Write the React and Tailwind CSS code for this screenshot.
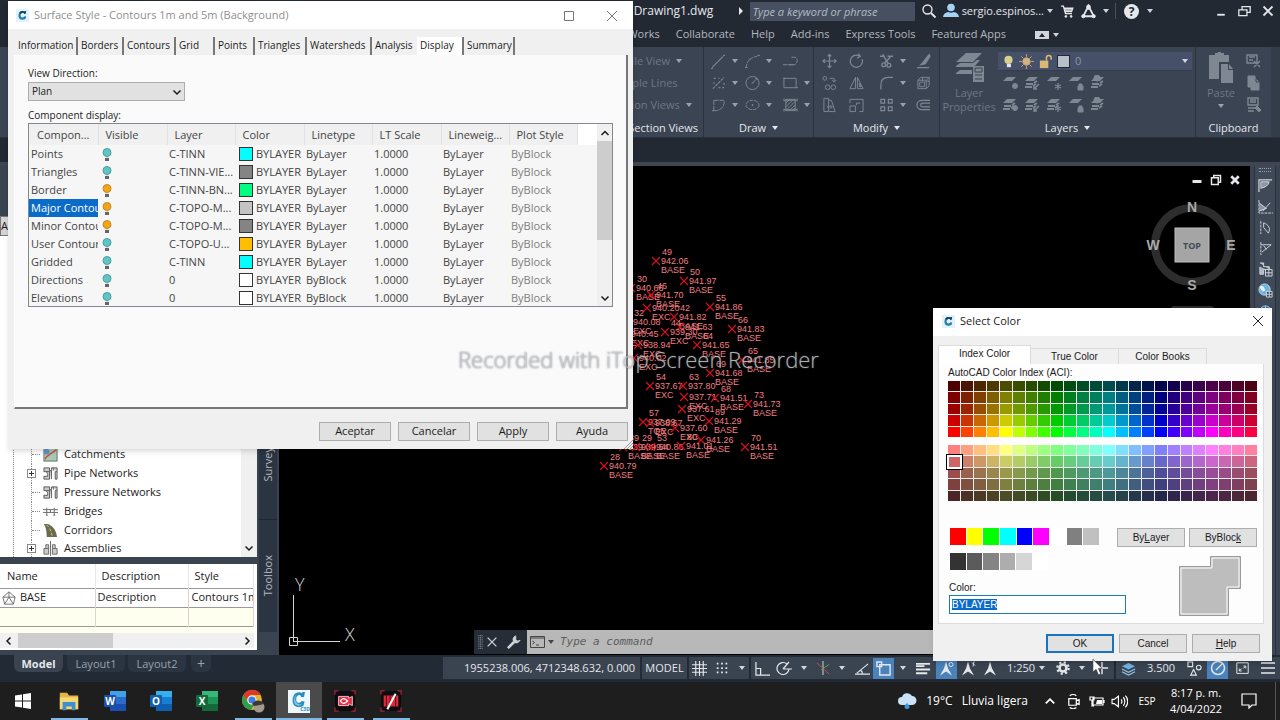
import { useEffect, useRef } from 'react';

/* ── Small shared pieces ── */

function Caret({ className = 'text-gray-300' }) {
  return (
    <svg viewBox="0 0 6 4" className={`w-[6px] h-[4px] shrink-0 ${className}`} fill="currentColor">
      <path d="M0 0h6L3 4z" />
    </svg>
  );
}

function Icon({ children, className = 'w-4 h-4' }) {
  return (
    <svg viewBox="0 0 16 16" className={`shrink-0 ${className}`} fill="none" stroke="currentColor" strokeWidth="1">
      {children}
    </svg>
  );
}

function CivilLogo({ className }) {
  return (
    <svg viewBox="0 0 16 16" className={className}>
      <rect width="16" height="16" rx="1" fill="#e3f1f8" />
      <path d="M12.500 2.500L11.800 5.800H10c-.2-1-1-1.300-2-1.100-1.700.3-2.300 1.800-2.300 3.400 0 1.700.9 2.500 2.300 2.300 1.200-.1 2-.6 2.600-1.400l2 .3-.8 2.700c-1 .9-2.400 1.300-4 1.300-3 0-4.800-1.800-4.800-5C3 4.900 5 2.700 8 2.600c1 0 1.800.2 2.400.7l.3-.8z" fill="#1f7fae" />
      <path d="M12.500 2.500L11.800 5.800H10c-.2-1-1-1.300-2-1.100-1 .2-1.600.7-2 1.500L4 4.500C5 3.300 6.300 2.600 8 2.600c1 0 1.800.2 2.400.7l.3-.8z" fill="#123f66" />
    </svg>
  );
}

function Chevron({ dir, className = 'w-[10px] h-[10px]' }) {
  const d = { up: 'M1.500 7L5 3.500 8.500 7', down: 'M1.500 3.500L5 7l3.500-3.500', left: 'M6.500 1.500L3 5l3.500 3.500', right: 'M3.500 1.500L7 5 3.500 8.500' };
  return (
    <svg viewBox="0 0 10 10" className={className} fill="none" stroke="currentColor" strokeWidth="1.500">
      <path d={d[dir]} />
    </svg>
  );
}

/* ── Title bar and ribbon ── */

function TitleBar() {
  return (
    <header className="h-[22px] shrink-0 flex items-center justify-end text-[12px] text-gray-200">
      <span className="w-[105px]">Drawing1.dwg</span>
      <svg viewBox="0 0 4 8" className="w-[4px] h-[8px] mr-[7px]" fill="#e5e7eb">
        <path d="M0 0l4 4-4 4z" />
      </svg>
      <input
        type="text"
        aria-label="Search help"
        placeholder="Type a keyword or phrase"
        className="w-[165px] h-[19px] px-[3px] bg-[#465061] text-[11px] italic placeholder-[#b4bac3] outline-none"
      />
      <button aria-label="Search" className="w-[28px] flex justify-center">
        <Icon>
          <circle cx="6.500" cy="6.500" r="4.500" strokeWidth="1.400" />
          <path d="M10 10l4.500 4.500" strokeWidth="2" />
        </Icon>
      </button>
      <button className="flex items-center gap-[3px] text-[11px] whitespace-nowrap">
        <svg viewBox="0 0 16 16" className="w-4 h-4" fill="#a4d3f5">
          <circle cx="8" cy="4.500" r="3.800" />
          <path d="M0 14c.3-3 2.500-4.500 5.500-5 1.500 1 3.500 1 5 0 3 .5 5.200 2 5.500 5z" />
        </svg>
        sergio.espinos...
        <Caret />
      </button>
      <button aria-label="Store" className="w-[28px] flex justify-center">
        <Icon className="w-[13px] h-[13px]">
          <path d="M0 1.500h3l2.500 9h8M4 4h10.500l-1.500 4H5M4 6h10" strokeWidth="1.600" />
          <circle cx="6" cy="14" r="1.200" fill="currentColor" />
          <circle cx="12.500" cy="14" r="1.200" fill="currentColor" />
        </Icon>
      </button>
      <button aria-label="Apps" className="w-[34px] flex items-center gap-[7px]">
        <Icon className="w-[15px] h-[15px]">
          <path d="M8 2L2.500 13h11zM8 2v4" strokeWidth="2" />
          <circle cx="8" cy="3" r="2" fill="currentColor" />
          <circle cx="2.500" cy="13" r="1.700" fill="currentColor" />
          <circle cx="13.500" cy="13" r="1.700" fill="currentColor" />
        </Icon>
        <Caret />
      </button>
      <span className="w-px h-4 bg-[#4a515c]" />
      <button aria-label="Help" className="w-[99px] pl-2 flex items-center gap-[8px]">
        <span className="w-[15px] h-[15px] rounded-full bg-gray-200 text-[#222933] text-[12px] leading-[15px] font-bold">?</span>
        <Caret />
      </button>
      <div className="flex items-center gap-[11px] pr-[6px]">
        <button aria-label="Minimize"><Icon className="w-[12px] h-[12px]"><path d="M3 13h10" strokeWidth="2.500" /></Icon></button>
        <button aria-label="Restore"><Icon className="w-[13px] h-[13px]"><path d="M5 6V2h10v7h-4M1 6h10v7H1z" strokeWidth="1.600" /></Icon></button>
        <button aria-label="Close"><Icon className="w-[12px] h-[12px]"><path d="M2 2l12 12M14 2L2 14" strokeWidth="2.400" /></Icon></button>
      </div>
    </header>
  );
}

function MenuTabs() {
  return (
    <nav className="h-[25px] shrink-0 flex items-center justify-end gap-[16px] pr-[221px] text-[11px] text-[#b3b8bf]">
      {['Autodesk Works', 'Collaborate', 'Help', 'Add-ins', 'Express Tools', 'Featured Apps'].map((t) => (
        <a key={t} href="#" className="whitespace-nowrap">{t}</a>
      ))}
      <button aria-label="Ribbon display" className="ml-[13px] flex items-center gap-1">
        <span className="w-[14px] h-2 bg-gray-300 flex items-center justify-center text-[#222933]">
          <Caret className="rotate-180 w-[5px] text-[#222933]" />
        </span>
        <Caret />
      </button>
    </nav>
  );
}

const drawTools = [
  { name: 'Line', menu: true, art: <path d="M1 15L13 3M0 16h2M13 2h2" strokeWidth="1.200" /> },
  { name: 'Arc', menu: true, art: <path d="M1 15C2 9 5 4 13 3M0 15h3M4 6h2M13 2h3" strokeDasharray="4 1" /> },
  { name: 'Polyline', art: <path d="M0 12h9M1 12v-1M9 4h4c3 1 3 7-1 8h-3M6 12h5" strokeDasharray="5 1" /> },
  { name: 'Points', menu: true, art: <path d="M2 14L14 2M3 3h2M8 3h1M2 8h2M8 13h2M13 9h2M12 13h2" strokeDasharray="3 1" strokeWidth="1.300" /> },
  { name: 'Circle', menu: true, art: <><circle cx="8" cy="8" r="7" /><path d="M8 8l4-4M7 8h2M11 3l2 0v2" /></> },
  { name: 'Rectangle', menu: true, art: <path d="M1 3h13v10H1zM0 3h3M13 13h3" /> },
  { name: 'Region', menu: true, art: <path d="M3 3h11c1 6-3 10-8 11M3 3v11M1 14h5" strokeDasharray="5 1" /> },
  { name: 'Ellipse', menu: true, art: <><ellipse cx="8" cy="8" rx="7" ry="5" strokeDasharray="4 1" /><path d="M7 8h2M8 7v2" /></> },
  { name: 'Hatch', menu: true, art: <path d="M1 1v3M15 1v3M1 12v3M15 12v3M3 2h10v12H3zM3 6l4-4M3 10l8-8M3 14L13 4M7 14l6-6M10 14l3-3M1 3h14M1 13h14" /> },
];

const modifyTools = [
  { name: 'Move', art: <path d="M8 1v14M1 8h14M6 3l2-2 2 2M6 13l2 2 2-2M3 6L1 8l2 2M13 6l2 2-2 2" strokeWidth="1.300" /> },
  { name: 'Rotate', art: <path d="M11 2.500A6.500 6.500 0 1 0 14 6M10 0l2 3-3.500 2" strokeWidth="1.300" /> },
  { name: 'Trim', menu: true, art: <><path d="M1 3h5M9 3h6M4 1l6 10M12 4L6 10" strokeWidth="1.600" /><circle cx="5" cy="12" r="2" strokeWidth="1.500" /><circle cx="10.500" cy="12.500" r="2" strokeWidth="1.500" /></> },
  { name: 'Erase', art: <path d="M14 1L7 10 5 12l5-1 5-8zM1 15h13" fill="currentColor" strokeWidth="1.200" /> },
  { name: 'Copy', art: <><circle cx="3" cy="3" r="2" /><circle cx="6" cy="12.500" r="2.500" /><circle cx="12" cy="12.500" r="2.500" /><path d="M8 3h5v4M11 5l2 2 2-2" /></> },
  { name: 'Mirror', art: <path d="M7 2v12H1zM9 2v12h6zM11 8v4h2z" /> },
  { name: 'Fillet', menu: true, art: <path d="M2 15V10C2 5 5 2 10 2h5" strokeWidth="1.300" /> },
  { name: 'Explode', art: <path d="M2 5h9v9H2zM2 5l3-3h9v9l-3 3M11 5l3-3M4 7h5v5H4zM7 2v4M14 6h-4" /> },
  { name: 'Stretch', art: <path d="M2 1h5v14H2zM7 3l3 0 4 12H7M5 10h5M9 8l2 2-2 2" /> },
  { name: 'Scale', art: <path d="M1 9h6v6H1zM1 6V2h14v13h-4M8 8V6h4" /> },
  { name: 'Array', menu: true, art: <path d="M2 2h4v4H2zM10 2h4v4h-4zM2 10h4v4H2zM10 10h4v4h-4z" strokeWidth="1.300" /> },
  { name: 'Offset', art: <path d="M15 3H6a5 5 0 0 0 0 10h9M15 6H7a2 2 0 0 0 0 4h8" strokeWidth="1.300" /> },
];

function ToolGrid({ tools, className }) {
  return (
    <div className={`grid gap-y-[6px] ${className}`}>
      {tools.map((t) => (
        <button key={t.name} aria-label={t.name} className="flex items-center gap-[6px] text-[#7f8792]">
          <Icon className="w-[15px] h-4">{t.art}</Icon>
          {t.menu && <Caret className="text-gray-400 w-[5px]" />}
        </button>
      ))}
    </div>
  );
}

function PanelLabel({ children, menu }) {
  return (
    <div className="h-[18px] mt-auto flex items-center justify-center gap-[6px] text-[11px] text-gray-200 whitespace-nowrap">
      {children}
      {menu && <Caret className="text-gray-200" />}
    </div>
  );
}

const layerBadges = [
  <circle cx="13" cy="11" r="2.500" fill="currentColor" />,
  <path d="M15 9l-5 5M10 11v3h3" strokeWidth="1.500" />,
  <path d="M12 8v7M9 10l6 3M15 10l-6 3" strokeWidth="1.300" />,
  <path d="M10 11h5v4h-5zM11 11V9h3v2" fill="currentColor" />,
  <circle cx="7" cy="3" r="3" fill="currentColor" />,
];

function LayersGlyph({ badge, stacked }) {
  return (
    <Icon className="w-4 h-4">
      <path d="M5 2h9l-4 4H1z" fill="currentColor" stroke="none" />
      {stacked && <path d="M2 9h7M1 12h7M10 8l3-2M9 11l3-2" strokeWidth="1.800" />}
      {badge}
    </Icon>
  );
}

function Ribbon() {
  return (
    <div className="h-[91px] shrink-0 flex justify-end bg-[#3b4453] border-b border-[#2a323e] text-[11px] text-[#6f7783]">
      <section className="w-[205px] flex flex-col border-r border-[#2a323e]">
        <div className="w-[93px] ml-auto pt-[6px] flex flex-col gap-[6px] whitespace-nowrap leading-[16px]">
          <button className="flex items-center gap-[6px]">Profile View <Caret className="text-gray-400 w-[5px]" /></button>
          <button className="text-left">Sample Lines</button>
          <button className="flex items-center gap-[6px]">Section Views <Caret className="text-gray-400 w-[5px]" /></button>
        </div>
        <div className="mt-auto pr-[5px] h-[18px] text-right text-gray-200 leading-[18px]">Profile &amp; Section Views</div>
      </section>
      <section className="w-[110px] flex flex-col border-r border-[#2a323e] pt-[6px]">
        <ToolGrid tools={drawTools} className="pl-[7px] grid-cols-[34px_38px_30px]" />
        <PanelLabel menu>Draw</PanelLabel>
      </section>
      <section className="w-[126px] flex flex-col border-r border-[#2a323e] pt-[6px]">
        <ToolGrid tools={modifyTools} className="pl-[8px] grid-cols-[27px_30px_37px_20px]" />
        <PanelLabel menu>Modify</PanelLabel>
      </section>
      <section className="w-[256px] flex flex-col border-r border-[#2a323e]">
        <div className="flex pt-[5px]">
          <button className="w-[58px] flex flex-col items-center leading-[14px]">
            <svg viewBox="0 0 30 30" className="w-[30px] h-[32px] mb-[2px]" fill="#7f8792">
              <path d="M12 0h16l-9 9H2zM2 13l4-3h13l4-3h3l-6 7H2zM2 20l4-3h12v4H2z" />
              <rect x="19" y="13" width="11" height="16" />
              <path d="M21 15h7v4h-7zM21 22h7M21 26h7" fill="none" stroke="#3b4453" />
            </svg>
            Layer
            <span>Properties</span>
          </button>
          <div className="flex-1 pr-[3px]">
            <button aria-label="Current layer 0" className="w-full h-[19px] px-1 flex items-center gap-[3px] bg-[#465069] border-b border-[#333c4b]">
              <svg viewBox="0 0 16 16" className="w-[13px] h-[15px]">
                <circle cx="8" cy="6" r="5" fill="#d8cf8c" />
                <rect x="6" y="11" width="5" height="4" fill="#e2e4e8" />
              </svg>
              <svg viewBox="0 0 16 16" className="w-[17px] h-[15px]" stroke="#c9a877">
                <circle cx="8" cy="8" r="4" fill="#d3b183" />
                <path d="M8 0v3M8 13v3M0 8h3M13 8h3M2.500 2.500l2 2M11.500 11.500l2 2M13.500 2.500l-2 2M2.500 13.500l2-2" />
              </svg>
              <svg viewBox="0 0 16 16" className="w-[15px] h-[15px]">
                <path d="M9 7V4a2.500 2.500 0 0 1 5 0v2" fill="none" stroke="#d9b978" strokeWidth="1.600" />
                <rect x="2" y="7" width="9" height="8" fill="#d9b978" />
              </svg>
              <span className="w-[13px] h-[13px] ml-[1px] bg-[#b9bfc9] border border-[#222933]" />
              <span className="ml-[2px] text-[#8c93a0]">0</span>
              <Caret className="ml-auto text-gray-300" />
            </button>
            <div className="mt-[4px] pl-[4px] grid grid-cols-[repeat(5,22px)] gap-y-[6px] text-[#7f8792]">
              {layerBadges.map((b, i) => <button key={i} aria-label={`Layer tool ${i + 1}`}><LayersGlyph badge={b} stacked={i === 1 || i === 4} /></button>)}
              {layerBadges.map((b, i) => <button key={i} aria-label={`Layer tool ${i + 6}`}><LayersGlyph badge={b} stacked={i !== 3} /></button>)}
            </div>
          </div>
        </div>
        <PanelLabel menu>Layers</PanelLabel>
      </section>
      <section className="w-[75px] flex flex-col">
        <div className="flex pt-[5px]">
          <button className="w-[50px] flex flex-col items-center leading-[14px]">
            <svg viewBox="0 0 26 32" className="w-[26px] h-[32px] mb-[2px]" fill="#7f8792">
              <path d="M1 3h6V1h3V0h3v1h3v2h5v7H11v17H1z" />
              <path d="M13 12h7v6h5v13H13zM21 12l4 5h-4z" />
            </svg>
            Paste
            <Caret className="text-gray-400 mt-1" />
          </button>
          <div className="flex flex-col gap-[6px] pt-px text-[#7f8792]">
            <button aria-label="Cut"><Icon className="block w-4 h-4"><path d="M1 2h10v8H1zM3 4h6M3 7h4M8 8l6 6M14 8l-6 6" strokeWidth="1.400" /></Icon></button>
            <button aria-label="Copy clip"><Icon className="block w-4 h-4"><path d="M2 1h7v11H2zM5 4h5l3 3v8H5z" fill="currentColor" /><path d="M10 4v3h3" stroke="#3b4453" /></Icon></button>
            <button aria-label="Match"><Icon className="block w-4 h-4"><path d="M2 1h10v7H2zM4 3h6M4 5h6M2 11h7M2 14h6" strokeWidth="1.400" /><path d="M11 9l4 4-2 2-4-4z" fill="currentColor" /></Icon></button>
          </div>
        </div>
        <PanelLabel>Clipboard</PanelLabel>
      </section>
      <div className="w-[9px] bg-[#333c49]" />
    </div>
  );
}

/* ── Toolspace ── */

const treeItems = [
  { name: 'Catchments', art: <><rect x="1" y="1" width="14" height="14" fill="#a8c9b3" stroke="#5c6b70" /><path d="M2 13C5 8 8 8 14 3" stroke="#c2513e" strokeWidth="1.500" /><circle cx="4" cy="5" r="3" fill="#5d93c4" stroke="none" /></> },
  { name: 'Pipe Networks', open: true, art: <path d="M1 2h6v4H1zM3 6c2 1 2 2 2 5H1v3h6V6M9 14V5H7M9 2h6v4h-2v8h2V6M9 2v3M11 2v3" stroke="#555" fill="#ccc" /> },
  { name: 'Pressure Networks', art: <path d="M1 2h6v4H1zM3 6c2 1 2 2 2 5H1v3h6V6M9 14V5H7M9 2h6v4h-2v8h2V6M9 2v3M11 2v3" stroke="#555" fill="#ccc" /> },
  { name: 'Bridges', art: <path d="M0 6h16M0 9h16M4 4v8M8 6v3M12 4v8M3 12h2M11 12h2" stroke="#666" /> },
  { name: 'Corridors', art: <><path d="M1 1h4c6 2 9 7 10 14H4C4 9 3 4 1 1z" fill="#6c6a55" stroke="none" /><path d="M4 2c4 4 5 8 6 13" stroke="#e0d040" strokeDasharray="3 2" /></> },
  { name: 'Assemblies', open: true, art: <path d="M8 0v16M1 8h5v6H1zM10 8h5v6h-5zM3 8V4h3v4M10 8V4h3v4" stroke="#666" fill="#ccc" /> },
];

function Toolspace() {
  return (
    <aside className="w-[279px] shrink-0 flex bg-[#3a4350] text-[11px] text-[#1b1b1b]">
      <div className="w-[257px] flex flex-col min-h-0">
        <select aria-label="Toolspace view" className="mt-[50px] h-5 shrink-0 appearance-none bg-[#d4d4d4] border border-[#777]">
          <option>Active Drawing Settings View</option>
        </select>
        <div className="flex-1 min-h-0 flex bg-white">
          <ul className="flex-1 flex flex-col justify-end overflow-hidden ml-[13px] border-l border-dotted border-[#888]">
            {treeItems.map((t) => (
              <li key={t.name} className="h-[19px] last:h-[17px] shrink-0 flex items-center ml-[17px] border-l border-dotted border-[#888]">
                {t.open ? (
                  <button aria-label={`Expand ${t.name}`} className="w-[9px] h-[9px] -ml-[5px] mr-[7px] bg-white border border-[#888]">
                    <svg viewBox="0 0 7 7" className="block w-[7px] h-[7px]" stroke="#333"><path d="M1 3.500h5M3.500 1v5" /></svg>
                  </button>
                ) : (
                  <span className="w-2 mr-[3px] border-t border-dotted border-[#888]" />
                )}
                <Icon className="w-[15px] h-[15px]">{t.art}</Icon>
                <span className="ml-[6px] whitespace-nowrap">{t.name}</span>
              </li>
            ))}
          </ul>
          <div className="w-4 bg-[#f0f0f0] flex items-end justify-center pb-1">
            <Chevron dir="down" />
          </div>
        </div>
        <div className="h-[7px] shrink-0" />
        <div className="h-[86px] shrink-0 mb-[5px] bg-white flex flex-col pr-[3px]">
          <table className="w-full table-fixed border-collapse text-left">
            <thead>
              <tr className="h-[24px]">
                <th className="w-[95px] pl-[7px] font-normal border-r border-gray-200">Name</th>
                <th className="w-[93px] pl-[6px] font-normal border-r border-gray-200">Description</th>
                <th className="pl-[6px] font-normal border-r border-gray-200">Style</th>
              </tr>
            </thead>
            <tbody>
              <tr className="h-[19px] border-y border-[#9a9a9a]">
                <td className="border-r border-[#e6cfcf]">
                  <span className="flex items-center gap-1 pl-[2px]">
                    <Icon className="w-[14px] h-[14px]"><path d="M8 1l7 6-2 8H3L1 7zM8 1v6M1 7h7l7 0M8 7l-5 8M8 7l5 8" stroke="#666" /></Icon>
                    BASE
                  </span>
                </td>
                <td className="pl-[2px] border-r border-[#e6cfcf]">Description</td>
                <td className="pl-[3px] border-r border-[#e6cfcf] whitespace-nowrap overflow-hidden">Contours 1m and 5m</td>
              </tr>
              <tr className="h-[19px] bg-[#fffff0] border-b border-[#9a9a9a]">
                <td className="border-r border-[#e6cfcf]" />
                <td className="border-r border-[#e6cfcf]" />
                <td className="border-r border-[#e6cfcf]" />
              </tr>
            </tbody>
          </table>
          <div className="flex-1 bg-[#fffff0]" />
          <div className="h-[15px] shrink-0 mb-[2px] flex items-center bg-[#f0f0f0]">
            <span className="w-[18px] flex justify-center"><Chevron dir="left" /></span>
            <span className="w-[95px] h-full bg-[#cdcdcd]" />
            <span className="ml-auto pr-[2px]"><Chevron dir="right" /></span>
          </div>
        </div>
      </div>
      <div className="flex-1 flex flex-col justify-end pl-[2px] pr-[2px] pb-[23px] text-[#b3b8bf]">
        <button className="flex-1 w-full flex items-end justify-center pb-[38px] bg-[#2b3441] border-b border-[#1f2630]">
          <span className="[writing-mode:vertical-rl] rotate-180">Survey</span>
        </button>
        <button className="h-[112px] w-full flex items-center justify-center bg-[#2b3441]">
          <span className="[writing-mode:vertical-rl] rotate-180">Toolbox</span>
        </button>
      </div>
    </aside>
  );
}

/* ── Drawing area ── */

const surveyPoints = [
  [656, 261, '942.06', '49', 'BASE'],
  [684, 281, '941.97', '50', 'BASE'],
  [631, 288, '940.66', '30', 'BASE'],
  [651, 295, '941.70', '46', 'BASE'],
  [710, 307, '941.86', '55', 'BASE'],
  [647, 308, '940.20', '', 'EXC'],
  [674, 317, '941.82', '42', 'BASE'],
  [732, 329, '941.83', '66', 'BASE'],
  [680, 327, '941.63', '', 'BASE'],
  [665, 332, '939.30', '44', 'EXC'],
  [697, 345, '941.65', '64', 'BASE'],
  [628, 322, '940.08', '32', 'EXC'],
  [626, 334, '940.45', '', 'EXC'],
  [638, 345, '938.94', '', 'EXC'],
  [634, 358, '940.02', '', 'EXC'],
  [742, 360, '941.85', '65', 'BASE'],
  [710, 373, '941.68', '69', 'BASE'],
  [650, 386, '937.67', '54', 'EXC'],
  [683, 386, '937.80', '63', ''],
  [684, 397, '937.71', '', 'EXC'],
  [715, 398, '941.51', '68', 'BASE'],
  [748, 404, '941.73', '73', 'BASE'],
  [682, 409, '937.61', '', 'EXC'],
  [643, 422, '937.09', '57', 'TOE'],
  [650, 423, '938.67', '', 'EXC'],
  [709, 421, '941.29', '89', 'BASE'],
  [675, 428, '937.60', '', 'EXC'],
  [701, 440, '941.26', '', 'BASE'],
  [745, 447, '941.51', '70', 'BASE'],
  [623, 447, '939.09', '39', 'BASE'],
  [636, 447, '939.54', '29', 'BASE'],
  [651, 447, '940.86', '53', 'BASE'],
  [681, 446, '941.01', '80', 'BASE'],
  [604, 466, '940.79', '28', 'BASE'],
];

function Canvas() {
  return (
    <main className="flex-1 relative bg-black overflow-hidden">
      <svg className="absolute inset-0 w-full h-full" fill="none">
        <g transform="translate(-279 -166)">
          {surveyPoints.map(([x, y, z, n, code]) => (
            <g key={`${x}-${y}`}>
              <path d={`M${x - 4} ${y - 4}l8 8M${x + 4} ${y - 4}l-8 8`} stroke="#d0141c" strokeWidth="1.200" />
              <g fill="#f07e82" fontSize="9" fontFamily="'Liberation Sans', sans-serif">
                {n && <text x={x + 6} y={y - 6}>{n}</text>}
                <text x={x + 5} y={y + 3}>{z}</text>
                {code && <text x={x + 5} y={y + 12}>{code}</text>}
              </g>
            </g>
          ))}
          <path d="M293.500 595v46M293 641.500h47M289.500 637.500h8v8h-8z" stroke="#d4d4d4" />
          <g fill="#d4d4d4" fontSize="18" fontWeight="300" fontFamily="'Open Sans', sans-serif">
            <text x="295" y="591">Y</text>
            <text x="345" y="641">X</text>
          </g>
        </g>
      </svg>

      {/* Viewport controls */}
      <div className="absolute top-[8px] right-[9px] flex items-center gap-[7px] text-gray-200">
        <button aria-label="Minimize drawing"><Icon className="w-3 h-3"><path d="M2 10h12" strokeWidth="4" /></Icon></button>
        <button aria-label="Restore drawing"><Icon className="w-3 h-3"><path d="M5 5V2h9v9h-3M2 5h9v9H2z" strokeWidth="2" /></Icon></button>
        <button aria-label="Close drawing"><Icon className="w-3 h-3"><path d="M3 3l10 10M13 3L3 13" strokeWidth="3.500" /></Icon></button>
      </div>

      {/* View cube */}
      <svg viewBox="0 0 100 130" className="absolute top-[29px] right-[8px] w-[100px] h-[130px]">
        <circle cx="50" cy="50" r="37" fill="none" stroke="#2d2d2d" strokeWidth="8" />
        <rect x="33" y="33" width="34" height="34" fill="#a5a5a5" stroke="#bdbdbd" />
        <rect x="29" y="111" width="43" height="12" rx="3" fill="#2d2d2d" />
        <g fontFamily="'Liberation Sans', sans-serif" fontWeight="700" textAnchor="middle" fill="#a8a8a8" fontSize="14">
          <text x="50" y="17">N</text>
          <text x="50" y="95">S</text>
          <text x="11" y="55">W</text>
          <text x="89" y="55">E</text>
          <text x="50" y="54" fontSize="9" fill="#3f4b55" fontFamily="'Open Sans', sans-serif">TOP</text>
        </g>
      </svg>

      {/* Command line */}
      <div className="absolute left-[195px] right-0 bottom-px h-6 flex bg-[#262d37] text-gray-300">
        <div className="w-[53px] pl-1 flex items-center gap-[4px]">
          <svg viewBox="0 0 6 16" className="w-[5px] h-4" stroke="#c4c8ce" strokeDasharray="1 1.500"><path d="M1 0v16M3 0v16M5 0v16" /></svg>
          <button aria-label="Close command line"><Icon className="w-[10px] h-[10px]"><path d="M1 1l14 14M15 1L1 15" strokeWidth="2" /></Icon></button>
          <button aria-label="Customize" className="ml-[6px]">
            <Icon className="w-[14px] h-[14px]"><path d="M1 15L8 8" strokeWidth="3" /><path d="M10 1C7 2 6 5 8 8c2 2 5 1 7-2l-3 1-2-2z" fill="currentColor" /></Icon>
          </button>
        </div>
        <label className="flex-1 flex items-center gap-[3px] pl-[3px] bg-[#b8b8b8] text-[#444]">
          <svg viewBox="0 0 15 12" className="w-[15px] h-[12px]" fill="none" stroke="#444">
            <path d="M.5.5h14v11H.5zM.5 2h14M2.500 5l2 1.500-2 1.500M6 9h3" />
          </svg>
          <Caret className="text-[#444]" />
          <input
            type="text"
            aria-label="Command"
            placeholder="Type a command"
            className="flex-1 ml-[3px] bg-transparent outline-none italic text-[11px] font-['DejaVu_Sans_Mono','Liberation_Mono',monospace] placeholder-[#5c5c5c]"
          />
        </label>
      </div>
    </main>
  );
}

const sideTools = [
  <><path d="M1 15V2h14" strokeWidth="1.300" /><path d="M3 4h9C11 8 8 10 3 11z" fill="#8d96a3" /></>,
  <><path d="M1 1v14h15" strokeDasharray="3 1" /><path d="M1 4l8 6-8 3M5 13l8-9" fill="#8d96a3" /></>,
  <><path d="M3 1v14" strokeDasharray="3 1" /><path d="M6 3c5 2 8 6 5 11L6 8z" /></>,
  <><path d="M3 1v14" strokeDasharray="3 1" /><path d="M3 4h11L4 12M6 5l3 4" /></>,
  <><path d="M2 1h4v4h6v3M2 5v8h4V8h3" fill="#aeb5bf" /><path d="M8 8h7v7H8zM8 11.500h7M11.500 8v7" /></>,
  <><circle cx="7" cy="7" r="6" fill="#6fb4dc" stroke="#b5dcf2" /><path d="M3 3l3 1 2 4-3 1-3-4z" fill="#e6f1f7" stroke="none" /><path d="M9 9h6v6H9zM9 12h6M12 9v6" fill="#3a4350" /></>,
  <><circle cx="8" cy="8" r="6" fill="#2f6f9e" stroke="#9fcbe6" /><path d="M2 8h12M8 2v12M4 4l8 8" stroke="#9fcbe6" /></>,
];

function SideToolbar() {
  return (
    <div className="w-[30px] shrink-0 pl-1 pr-1 bg-[#3a4350]">
      <div className="h-full flex flex-col items-center gap-[6px] pt-[2px] bg-[#3f4957] border-x border-[#2a323e] text-gray-300">
        <span className="w-3 h-1 border-y border-dotted border-gray-400" />
        {sideTools.map((art, i) => (
          <button key={i} aria-label={`View tool ${i + 1}`}><Icon className="block w-[15px] h-[15px]">{art}</Icon></button>
        ))}
      </div>
    </div>
  );
}

/* ── Status bar ── */

function StatusBtn({ label, on, className, children }) {
  return (
    <button aria-label={label} className={`h-[21px] flex items-center justify-center ${on ? 'bg-[#4a82bb]' : ''} ${className}`}>
      {children}
    </button>
  );
}

function AnnoGlyph({ children }) {
  return (
    <Icon className="w-[16px] h-[17px]">
      <path d="M7 1L5 8 1 15l6-4 6 4-4-7z" fill="currentColor" stroke="none" />
      {children}
    </Icon>
  );
}

function StatusBar() {
  return (
    <footer className="h-[27px] shrink-0 flex justify-between bg-[#212a35] text-[11px] text-gray-200">
      <div className="flex items-start pl-[14px] text-[#9aa1ab]">
        <button className="w-[49px] h-[17px] font-bold text-gray-200 bg-[#3a4350] rounded-b-md leading-[17px]">Model</button>
        <button className="w-[58px] ml-1 h-[17px] bg-[#2b3441] rounded-b-md leading-[17px]">Layout1</button>
        <button className="w-[58px] ml-[3px] h-[17px] bg-[#2b3441] rounded-b-md leading-[17px]">Layout2</button>
        <button aria-label="New layout" className="w-[20px] ml-[5px] h-[17px] bg-[#2b3441] rounded-b-md leading-[17px] text-[14px]">+</button>
      </div>
      <div className="flex h-[26px] py-[2px] items-center">
        <span className="w-[197px] h-full pr-[5px] flex items-center justify-end bg-[#3a4350] whitespace-nowrap">1955238.006, 4712348.632, 0.000</span>
        <button className="w-[45px] h-full ml-[2px] bg-[#3a4350]">MODEL</button>
        <div className="h-full ml-[2px] flex items-center bg-[#3a4350]">
          <StatusBtn label="Grid" className="w-[21px]"><Icon className="w-[15px] h-[15px]"><path d="M4 0v16M8 0v16M12 0v16M0 4h16M0 8h16M0 12h16" strokeWidth="1.200" /></Icon></StatusBtn>
          <StatusBtn label="Snap" className="w-[24px]"><Icon className="w-[14px] h-[14px]"><path d="M2 3h13M2 8h13M2 13h13" strokeDasharray="2 3" strokeWidth="2" /></Icon></StatusBtn>
          <StatusBtn label="Snap menu" className="w-[15px]"><Caret /></StatusBtn>
        </div>
        <div className="h-full ml-[2px] flex items-center bg-[#3a4350]">
          <StatusBtn label="Ortho" className="w-[22px]"><Icon className="w-[15px] h-[15px]"><path d="M1 1v14h15M1 8h5v7" strokeWidth="1.300" /></Icon></StatusBtn>
          <StatusBtn label="Polar" className="w-[22px]"><Icon className="w-[16px] h-[16px]"><path d="M11 4a6 6 0 1 0 2 5M7 9h9M7 9l6-7" strokeWidth="1.200" /></Icon></StatusBtn>
          <StatusBtn label="Polar menu" className="w-[18px]"><Caret /></StatusBtn>
          <StatusBtn label="Isodraft" className="w-[19px]"><Icon className="w-[14px] h-[14px]"><path d="M8 0v16" /><path d="M1 2l14 13" stroke="#c75a4e" /><path d="M6 10l9-6" stroke="#5fae5f" /></Icon></StatusBtn>
          <StatusBtn label="Isodraft menu" className="w-[19px]"><Caret /></StatusBtn>
          <StatusBtn label="Tracking" className="w-[22px]"><Icon className="w-[15px] h-[15px]"><path d="M0 14h16M2 13L14 3M6 10c2 1 2 2 2 4" strokeWidth="1.200" /></Icon></StatusBtn>
          <StatusBtn label="Object snap" on className="w-[21px]"><Icon className="w-[15px] h-[15px]"><path d="M4 4h11v11H4V4zM1 1h5v5H1z" strokeWidth="1.500" /></Icon></StatusBtn>
          <StatusBtn label="Object snap menu" className="w-[17px]"><Caret /></StatusBtn>
          <StatusBtn label="Lineweight" className="w-[25px]"><Icon className="w-[15px] h-[15px]"><path d="M0 3h15M0 5.500h9M0 9h15M0 13h12" strokeWidth="2" /></Icon></StatusBtn>
          <StatusBtn label="Annotation visibility" on className="w-[21px]"><AnnoGlyph><circle cx="12" cy="4" r="2" /></AnnoGlyph></StatusBtn>
          <StatusBtn label="Auto scale" className="w-[23px]"><AnnoGlyph><path d="M11 2l3 3M13 1l-1 5" /></AnnoGlyph></StatusBtn>
          <StatusBtn label="Annotation" className="w-[22px]"><AnnoGlyph /></StatusBtn>
          <button className="w-[48px] flex items-center justify-center gap-[4px] whitespace-nowrap">1:250 <Caret /></button>
          <StatusBtn label="Workspace" className="w-[25px]"><Icon className="w-[14px] h-[14px]"><circle cx="8" cy="8" r="4" strokeWidth="3" /><circle cx="8" cy="8" r="6.500" strokeWidth="2.500" strokeDasharray="2.500 2.600" /></Icon></StatusBtn>
          <StatusBtn label="Workspace menu" className="w-[14px]"><Caret /></StatusBtn>
          <StatusBtn label="Monitor" className="w-[25px]"><Icon className="w-[14px] h-[14px]"><path d="M8 1v14M1 8h14" strokeWidth="1.600" /></Icon></StatusBtn>
        </div>
        <div className="h-full ml-[2px] flex items-center bg-[#3a4350]">
          <StatusBtn label="Elevation" className="w-[25px]">
            <svg viewBox="0 0 16 16" className="w-[15px] h-[15px]"><path d="M8 2l7 3.500L8 9 1 5.500z" fill="#6db3e3" /><path d="M1 8.500L8 12l7-3.500M1 11.500L8 15l7-3.500" fill="none" stroke="#8fc4ea" strokeWidth="1.300" /></svg>
          </StatusBtn>
          <span className="w-[40px] text-center">3.500</span>
          <StatusBtn label="Isolate" className="w-[26px]"><Icon className="w-[15px] h-[15px]"><path d="M1 1h5v5H1zM7 9l3 6H4z" strokeWidth="1.200" /><circle cx="12.500" cy="7" r="2.500" strokeWidth="1.200" /></Icon></StatusBtn>
          <StatusBtn label="Performance" on className="w-[21px]"><Icon className="w-[16px] h-[16px]"><circle cx="8" cy="8" r="6.500" strokeWidth="1.500" /><path d="M6 10L12 4" strokeWidth="1.200" /></Icon></StatusBtn>
          <StatusBtn label="Full screen" className="w-[28px]"><Icon className="w-[15px] h-[13px]"><path d="M1 1h14v13H1zM4 11l3-3M4 8v3h3M12 5L9 8M9 5h3v3" strokeWidth="1.200" /></Icon></StatusBtn>
          <StatusBtn label="Customization" className="w-[24px]"><Icon className="w-[16px] h-[16px]"><path d="M1 3h14M1 8h14M1 13h14" strokeWidth="1.500" /></Icon></StatusBtn>
        </div>
      </div>
    </footer>
  );
}

/* ── Windows taskbar ── */

function OfficeArt({ letter, dark, mid, light }) {
  return (
    <svg viewBox="0 0 24 24" className="w-6 h-6">
      <rect x="7" y="2" width="16" height="20" rx="1" fill={mid} />
      <rect x="7" y="2" width="16" height="6" fill={light} />
      <rect x="7" y="15" width="16" height="7" fill={dark} />
      <rect x="1" y="6" width="12" height="12" rx="1" fill={dark} />
      <text x="7" y="15.500" fontSize="10" fontWeight="700" fill="#fff" textAnchor="middle" fontFamily="'Open Sans', sans-serif">{letter}</text>
    </svg>
  );
}

function RecorderFrame({ children }) {
  return (
    <svg viewBox="0 0 24 24" className="w-[22px] h-[22px]">
      <rect x="1" y="1" width="22" height="22" rx="3" fill="#0d0d0f" />
      <path d="M1 5V1h4M19 1h4v4M23 19v4h-4M5 23H1v-4" fill="none" stroke="#9c2436" strokeWidth="1.500" />
      {children}
    </svg>
  );
}

const taskApps = [
  {
    name: 'Start',
    art: <svg viewBox="0 0 16 16" className="w-4 h-4" fill="#fff"><path d="M0 2.500L7 1.500V7.500H0zM8 1.300L16 0V7.500H8zM0 8.500H7V14.500L0 13.500zM8 8.500H16V16L8 14.700z" /></svg>,
  },
  {
    name: 'File Explorer',
    line: true,
    art: (
      <svg viewBox="0 0 24 24" className="w-[22px] h-[22px]">
        <path d="M2 3h8l2 3h10v15H2z" fill="#e5b544" />
        <path d="M2 8h20v13H2z" fill="#f7d774" />
        <path d="M5 13h14v9h-4v-4H9v4H5z" fill="#3d8fd1" />
      </svg>
    ),
  },
  { name: 'Word', art: <OfficeArt letter="W" dark="#1a50ad" mid="#2b6bc9" light="#439fe6" /> },
  { name: 'Outlook', art: <OfficeArt letter="O" dark="#0f5fb0" mid="#1a7fd4" light="#35b0ec" /> },
  { name: 'Excel', art: <OfficeArt letter="X" dark="#13693a" mid="#1f9357" light="#33b877" /> },
  {
    name: 'Chrome',
    line: true,
    art: (
      <svg viewBox="0 0 24 24" className="w-6 h-6">
        <circle cx="11" cy="11" r="10" fill="#e0b62d" />
        <path d="M2.300 6A10 10 0 0 1 20 6H11a5 5 0 0 0-4.500 7z" fill="#d93a2c" />
        <path d="M2.300 6A10 10 0 0 0 10 21l4-6.500a5 5 0 0 1-7.500-1.500z" fill="#2f9e4f" />
        <circle cx="11" cy="11" r="4.600" fill="#fff" />
        <circle cx="11" cy="11" r="3.600" fill="#3b7de0" />
        <circle cx="18" cy="18" r="5.500" fill="#a39a8c" />
        <path d="M11 15c2-4 9-5 12 0l-4 1-6 1z" fill="#3b3a38" />
      </svg>
    ),
  },
  {
    name: 'Civil 3D',
    active: true,
    art: (
      <svg viewBox="0 0 22 23" className="w-[22px] h-[23px]">
        <rect width="22" height="23" fill="#eef7fc" />
        <path d="M17 2l-1 5h-3c0-1.500-1-2-2-2-2 .3-2.800 2-2.800 4.500 0 2.300 1 3.500 2.800 3.300 1.200-.1 2-.7 2.600-1.800l3 .5-1 4c-1.200 1-3 1.500-5 1.500-4 0-6-2.500-6-6.500C4.600 5.500 7 2.300 11 2.200c1.300 0 2.300.3 3 1l.4-1.200z" fill="#2c8cbd" />
        <path d="M14 14.500c-1.500 1-3 1.500-4.500 1-2.500-.6-4-3-3.600-6 .3-2 1-3.600 2-4.600-.8 2-.8 4.300-.5 5.800.5 2.400 2.600 3.800 6.600 3.800z" fill="#7fc4e4" />
        <text x="17" y="21" fontSize="5" fontWeight="700" fill="#2c8cbd" textAnchor="middle" fontFamily="'Open Sans', sans-serif">C3D</text>
      </svg>
    ),
  },
  {
    name: 'Screen recorder',
    line: true,
    art: (
      <RecorderFrame>
        <path d="M5 7h11v2l4-2v10l-4-2v2H5z" fill="#e0304a" stroke="#f6c9cf" />
        <path d="M7 12c2-4 5-3 8 0-3 3-6 4-8 0z" fill="none" stroke="#fff" strokeWidth="1.300" />
      </RecorderFrame>
    ),
  },
  {
    name: 'Recorder capture',
    line: true,
    art: (
      <RecorderFrame>
        <rect x="4" y="6" width="16" height="12" fill="#dc2a3a" />
        <path d="M7 6v12M11 6v12M17 6v12" stroke="#4a0c14" />
        <path d="M17 4L8 21" stroke="#fff" strokeWidth="2.200" />
      </RecorderFrame>
    ),
  },
];

function Taskbar() {
  return (
    <div className="h-[38px] shrink-0 flex justify-between bg-[#1e1e1e] text-white">
      <div className="flex">
        {taskApps.map((a) => (
          <button
            key={a.name}
            aria-label={a.name}
            className={`w-[46px] pt-[2px] flex flex-col items-center ${a.active ? 'bg-[#4a4a4a]' : ''}`}
          >
            <span className="flex-1 flex items-center">{a.art}</span>
            <span className={`h-[2px] ${a.active ? 'w-full bg-[#80b8e6]' : 'w-[37px]'} ${a.line ? 'bg-[#80b8e6]' : ''}`} />
          </button>
        ))}
      </div>
      <div className="flex items-center text-[12px]">
        <button className="flex items-center gap-[9px] whitespace-nowrap">
          <svg viewBox="0 0 20 16" className="w-5 h-4">
            <path d="M5 12a4 4 0 0 1 0-8 5.500 5.500 0 0 1 10-1 4.500 4.500 0 0 1 0 9z" fill="#c9e2f7" />
            <path d="M9 16c-3-2-1-4 1-6 2 2 4 4 1 6z" fill="#3c96dc" />
          </svg>
          19°C <span>Lluvia ligera</span>
        </button>
        <button aria-label="Show hidden icons" className="w-[38px] pl-[6px] flex justify-center"><Chevron dir="up" className="w-3 h-3" /></button>
        <button aria-label="Camera" className="w-[23px]"><Icon className="w-[15px] h-[15px]"><path d="M3 5h8v7H3zM11 7l3-1v5l-3-1M4 2c2-2 5-2 7 0M4 14.500c2 1.500 5 1.500 7 0" strokeWidth="1.300" /></Icon></button>
        <button aria-label="Battery" className="w-[22px]"><Icon className="w-[16px] h-[16px]"><path d="M4 5h10v7H4zM15 7v3M1 4h4v3H1zM3 7v6h2" strokeWidth="1.200" /><path d="M8 7h5v4H7z" fill="currentColor" stroke="none" /></Icon></button>
        <button aria-label="Volume" className="w-[23px]"><Icon className="w-[17px] h-[17px]"><path d="M1 6h2l4-3v10l-4-3H1zM9.500 6c1 1 1 3 0 4M11.500 4c2 2 2 6 0 8M13.500 2.500c3 3 3 8 0 11" strokeWidth="1.100" /></Icon></button>
        <button className="w-[26px] text-[10px]">ESP</button>
        <time className="w-[72px] text-center text-[11px] leading-[16px]">8:17 p. m.<br />4/04/2022</time>
        <button aria-label="Notifications" className="w-[34px] flex justify-center">
          <Icon className="w-4 h-4"><path d="M1 1h14v11h-4l-3 3v-3H1z" strokeWidth="1.200" /></Icon>
        </button>
        <span className="w-px h-full ml-[9px] mr-[4px] bg-[#555]" />
      </div>
    </div>
  );
}

/* ── Surface Style dialog ── */

const styleTabs = [
  ['Information', 'w-[63px]'],
  ['Borders', 'w-[46px]'],
  ['Contours', 'w-[52px]'],
  ['Grid', 'w-[39px]'],
  ['Points', 'w-[40px]'],
  ['Triangles', 'w-[52px]'],
  ['Watersheds', 'w-[65px]'],
  ['Analysis', 'w-[45px]'],
  ['Display', 'w-[47px]'],
  ['Summary', 'w-[51px]'],
];

const components = [
  ['Points', false, 'C-TINN', '#00ffff', 'ByLayer'],
  ['Triangles', false, 'C-TINN-VIE...', '#848484', 'ByLayer'],
  ['Border', true, 'C-TINN-BN...', '#00ff80', 'ByLayer'],
  ['Major Contour', true, 'C-TOPO-M...', '#c4c4c4', 'ByLayer'],
  ['Minor Contour', true, 'C-TOPO-M...', '#848484', 'ByLayer'],
  ['User Contour', false, 'C-TOPO-U...', '#ffbf00', 'ByLayer'],
  ['Gridded', false, 'C-TINN', '#00ffff', 'ByLayer'],
  ['Directions', false, '0', '#ffffff', 'ByBlock'],
  ['Elevations', false, '0', '#ffffff', 'ByBlock'],
];

const columns = [
  ['Compon...', 'w-[69px] pl-2'],
  ['Visible', 'w-[69px] pl-[7px]'],
  ['Layer', 'w-[68px] pl-[7px]'],
  ['Color', 'w-[69px] pl-[7px]'],
  ['Linetype', 'w-[68px] pl-[7px]'],
  ['LT Scale', 'w-[69px] pl-[7px]'],
  ['Lineweig...', 'w-[68px] pl-[7px]'],
  ['Plot Style', 'w-[68px] pl-[7px]'],
];

function Bulb({ on }) {
  return (
    <svg viewBox="0 0 10 13" className="w-[10px] h-[13px]">
      <circle cx="5" cy="4.500" r="4" fill={on ? '#f5a60c' : '#5fc6c8'} stroke={on ? '#b98a3a' : '#4d9c9e'} />
      <rect x="3.500" y="9" width="3" height="1" fill="#ddd" />
      <rect x="3" y="10" width="4" height="3" fill="#666" />
    </svg>
  );
}

function SurfaceStyleDialog() {
  return (
    <div role="dialog" aria-label="Surface Style" className="absolute left-[8px] top-px w-[625px] h-[448px] flex flex-col bg-[#f0f0f0] shadow-md text-[11px] text-[#1b1b1b]">
      <div className="h-7 shrink-0 flex items-center bg-white pl-2 text-[#8f8f8f]">
        <CivilLogo className="w-[13px] h-[13px]" />
        <h1 className="ml-[5px]">Surface Style - Contours 1m and 5m (Background)</h1>
        <div className="ml-auto flex items-center">
          <button aria-label="Maximize" className="w-[43px]"><svg viewBox="0 0 10 10" className="inline w-[10px] h-[10px]" fill="none" stroke="#777"><path d="M.5.5h9v9h-9z" /></svg></button>
          <button aria-label="Close" className="w-[43px]"><svg viewBox="0 0 10 10" className="inline w-[10px] h-[10px]" fill="none" stroke="#777"><path d="M0 0l10 10M10 0L0 10" /></svg></button>
        </div>
      </div>
      <div role="tablist" className="flex h-[26px] shrink-0 items-end pl-[7px] text-[10px]">
        {styleTabs.map(([t, w]) => (
          <button
            key={t}
            role="tab"
            className={`${w} h-[18px] pb-[2px] pl-[3px] text-left leading-[16px] whitespace-nowrap ${t === 'Display' ? 'bg-white' : ''} ${t === 'Analysis' ? '' : 'border-r-2 border-[#777]'}`}
          >
            {t}
          </button>
        ))}
      </div>
      <div className="flex-1 flex flex-col ml-[6px] mr-[5px] pl-[13px] pr-[13px] bg-[#fafafa] border-r-2 border-b-2 border-[#777] border-l border-l-white">
        <label htmlFor="direction" className="mt-[10px] mb-px text-[10px] leading-[16px]">View Direction:</label>
        <div className="relative w-[157px] h-[19px]">
          <select id="direction" className="w-full h-full pl-[3px] appearance-none bg-[#e1e1e1] border border-[#adadad] text-[10px]">
            <option>Plan</option>
          </select>
          <Chevron dir="down" className="absolute right-[3px] top-[5px] w-[10px] h-[10px] pointer-events-none" />
        </div>
        <p className="mt-[6px] text-[10px] leading-[16px]">Component display:</p>
        <div className="h-[184px] flex border border-[#828790] overflow-hidden bg-[#f6f6f6]">
          <table className="table-fixed w-[548px] text-left text-[#444]">
            <thead>
              <tr className="h-[21px] bg-[#f0f0f0]">
                {columns.map(([c, cls]) => (
                  <th key={c} className={`${cls} font-normal leading-[21px] whitespace-nowrap border-r border-[#e2e2e2]`}>{c}</th>
                ))}
              </tr>
            </thead>
            <tbody>
              {components.map(([name, on, layer, color, line]) => (
                <tr key={name} className="h-[18px] leading-[16px]">
                  <td className={`pl-[2px] overflow-hidden whitespace-nowrap ${name === 'Major Contour' ? 'bg-[#0a6bc9] text-white' : ''}`}>{name}</td>
                  <td className="pl-[4px]"><Bulb on={on} /></td>
                  <td className="pl-[2px] whitespace-nowrap">{layer}</td>
                  <td className="pl-[4px]">
                    <span className="flex items-center gap-[3px]">
                      <span className="w-[14px] h-[14px] shrink-0 border border-[#333]" style={{ backgroundColor: color }} />
                      BYLAYER
                    </span>
                  </td>
                  <td className="pl-[2px]">{line}</td>
                  <td className="pl-[2px]">1.0000</td>
                  <td className="pl-[2px]">ByLayer</td>
                  <td className="pl-[2px] text-[#808080]">ByBlock</td>
                </tr>
              ))}
            </tbody>
          </table>
          <div className="flex-1 h-[21px] bg-white" />
          <div className="w-[15px] flex flex-col items-center bg-[#f0f0f0]">
            <span className="h-[17px] flex items-center"><Chevron dir="up" /></span>
            <span className="w-full h-[99px] bg-[#cdcdcd]" />
            <span className="mt-auto h-[17px] flex items-center"><Chevron dir="down" /></span>
          </div>
        </div>
      </div>
      <div className="relative h-[40px] shrink-0 flex items-center justify-end gap-[7px] pr-[5px] pt-[4px]">
        {['Aceptar', 'Cancelar', 'Apply', 'Ayuda'].map((b) => (
          <button key={b} className="w-[72px] h-[19px] bg-[#e1e1e1] border border-[#adadad]">{b}</button>
        ))}
        <svg viewBox="0 0 9 9" className="absolute right-0 bottom-0 w-[9px] h-[9px]" stroke="#999"><path d="M0 9l9-9M3 9l6-6M6 9l3-3" /></svg>
      </div>
    </div>
  );
}

/* ── Select Color dialog ── */

const levels = [76, 127, 153, 204, 255];

function hsv(hue, value, sat) {
  const f = (n) => {
    const k = (n + hue / 60) % 6;
    return Math.round(value * (1 - sat * Math.max(0, Math.min(k, 4 - k, 1))));
  };
  return `rgb(${f(5)}, ${f(3)}, ${f(1)})`;
}

function Palette({ rows, sat, label }) {
  return (
    <div role="group" aria-label={label} className="h-[56px] grid grid-cols-24 gap-px bg-[#ececec]">
      {rows.map((v) =>
        Array.from({ length: 24 }, (_, i) => (
          <button key={`${v}-${i}`} aria-label={hsv(i * 15, v, sat)} style={{ backgroundColor: hsv(i * 15, v, sat) }} />
        ))
      )}
    </div>
  );
}

function Swatches({ colors, className }) {
  return (
    <div className={`flex h-[17px] gap-px ${className}`}>
      {colors.map((c) => (
        <button key={c} aria-label={c} className="flex-1" style={{ backgroundColor: c }} />
      ))}
    </div>
  );
}

function SelectColorDialog() {
  const inputRef = useRef(null);

  useEffect(() => {
    inputRef.current.focus();
    inputRef.current.select();
  }, []);

  const btn = 'h-[19px] w-[68px] bg-[#e1e1e1]';

  return (
    <div role="dialog" aria-label="Select Color" className="absolute left-[933px] top-[308px] w-[339px] h-[353px] flex flex-col bg-[#f0f0f0] text-[#1b1b1b] shadow-md text-[10px] font-['Liberation_Sans',Arial,sans-serif]">
      <div className="h-7 shrink-0 flex items-center bg-white pb-[2px] pl-[9px] pr-[9px] font-['Open_Sans',sans-serif]">
        <CivilLogo className="w-[13px] h-[13px]" />
        <h2 className="ml-[5px] text-[11px]">Select Color</h2>
        <button aria-label="Close" className="ml-auto"><svg viewBox="0 0 10 10" className="w-[10px] h-[10px]" fill="none" stroke="#222"><path d="M0 0l10 10M10 0L0 10" /></svg></button>
      </div>
      <div role="tablist" className="h-7 shrink-0 flex items-end pl-[5px]">
        <button role="tab" className="w-[93px] h-[19px] pb-[3px] bg-white border border-b-0 border-[#dcdcdc]">Index Color</button>
        <button role="tab" className="w-[88px] h-[16px] border border-l-0 border-b-0 border-[#dcdcdc]">True Color</button>
        <button role="tab" className="w-[88px] h-[16px] border border-l-0 border-b-0 border-[#dcdcdc]">Color Books</button>
      </div>
      <div className="ml-[5px] mr-[8px] h-[260px] pl-[9px] pr-[6px] flex flex-col bg-[#fdfdfd] border border-t-0 border-[#dcdcdc]">
        <p className="h-[17px] leading-[17px]">AutoCAD Color Index (ACI):</p>
        <Palette rows={levels} sat={1} label="Full colors" />
        <div className="mt-2 relative">
          <Palette rows={[...levels].reverse()} sat={0.5} label="Muted colors" />
          <span className="absolute -left-[2px] top-[9px] w-[17px] h-[16px] border border-black outline outline-2 -outline-offset-3 outline-white" />
        </div>
        <div className="mt-[27px] flex items-start gap-[4px]">
          <div className="flex-1 flex flex-col gap-2 pl-[2px]">
            <Swatches className="w-[149px]" colors={['#ff0000', '#ffff00', '#00ff00', '#00ffff', '#0000ff', '#ff00ff', '#ffffff', '#808080', '#c0c0c0']} />
            <Swatches className="w-[98px]" colors={['#333333', '#5b5b5b', '#848484', '#adadad', '#d6d6d6', '#ffffff']} />
          </div>
          <button className={`${btn} border border-[#adadad]`}>By<u>L</u>ayer</button>
          <button className={`${btn} border border-[#adadad]`}>ByBloc<u>k</u></button>
        </div>
        <div className="mt-[-14px] flex items-end justify-between pr-[16px]">
          <div className="pb-[2px] pl-px">
            <label htmlFor="color" className="block leading-[14px]">Color:</label>
            <input
              id="color"
              ref={inputRef}
              type="text"
              defaultValue="BYLAYER"
              className="block w-[177px] h-[19px] px-[2px] bg-white border border-[#1b7ab8] outline-none text-[10px] selection:bg-[#0a6bc9] selection:text-white"
            />
          </div>
          <svg viewBox="0 0 62 60" className="w-[62px] h-[60px]" fill="#bdbdbd" stroke="#9a9a9a">
            <path d="M.5 10.500h31v-10h30v32h-12v27H.5z" />
            <path d="M2 12h31V2h27v29H48v27H2z" stroke="#fff" />
          </svg>
        </div>
      </div>
      <div className="flex-1 flex items-center justify-end gap-[5px] pt-[2px] pr-[12px]">
        <button className={`${btn} border-2 border-[#1b72c0]`}>OK</button>
        <button className={`${btn} border border-[#adadad]`}>Cancel</button>
        <button className={`${btn} border border-[#adadad]`}><u>H</u>elp</button>
      </div>
    </div>
  );
}

export default function App() {
  return (
    <div className="relative h-screen w-full overflow-hidden flex flex-col bg-[#222933] font-['Open_Sans','Noto_Sans',sans-serif]">
      <TitleBar />
      <MenuTabs />
      <Ribbon />
      <div className="h-[24px] shrink-0" />
      <div className="h-1 shrink-0 bg-[#3f4651]" />
      <div className="flex-1 min-h-0 flex">
        <Toolspace />
        <Canvas />
        <SideToolbar />
      </div>
      <StatusBar />
      <Taskbar />

      <SurfaceStyleDialog />
      <SelectColorDialog />

      <p className="absolute left-[458px] top-[344px] text-[22px] leading-[30px] font-light whitespace-nowrap text-gray-300/80 [text-shadow:0_0_2px_rgba(90,90,90,0.9)] pointer-events-none">
        Recorded with iTop Screen Recorder
      </p>
      <svg viewBox="0 0 12 18" className="absolute left-[1092px] top-[659px] w-[11px] h-[17px] pointer-events-none">
        <path d="M1 0v14l3.500-3 2.500 6 2.500-1-2.500-6H11z" fill="#fff" stroke="#333" strokeWidth=".7" />
      </svg>
    </div>
  );
}
